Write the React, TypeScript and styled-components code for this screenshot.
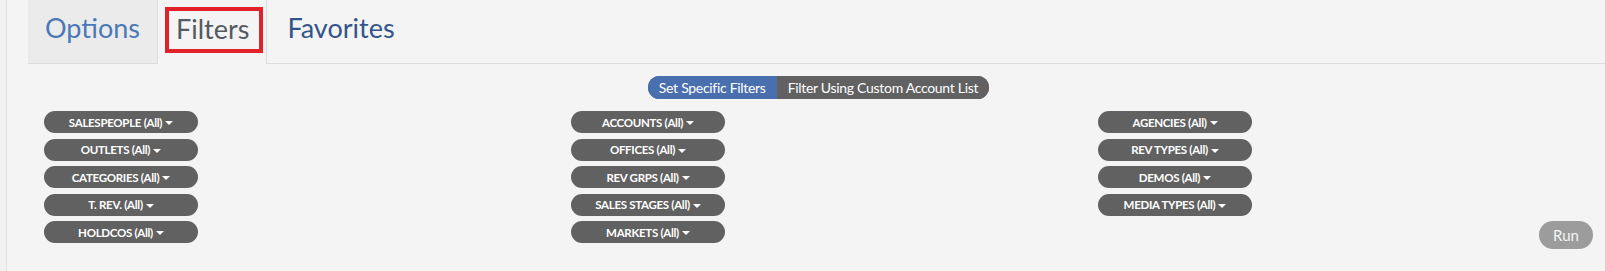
import React from "react";
import styled, { createGlobalStyle } from "styled-components";

const colors = {
    page: "#f4f4f4",
    line: "#dddddd",
    tabIdle: "#ebebeb",
    pill: "#616161",
    blue: "#4a6fae",
    run: "#9c9c9c",
};

const GlobalStyle = createGlobalStyle`
    body {
        margin: 0;
        background: #f2f2f2;
        overflow: hidden;
        font-family: Lato, "Liberation Sans", sans-serif;
    }
`;

const Page = styled.div`
    margin-left: 6px;
    border-left: 1px solid #e3e3e3;
    background: ${colors.page};
    min-height: 271px;
    padding-left: 21px;
`;

const TabBar = styled.nav`
    display: flex;
    height: 63px;
    border-bottom: 1px solid ${colors.line};
`;

type Tone = "options" | "filters" | "favorites";

const tabColor: Record<Tone, string> = {
    options: "#4b79b7",
    filters: "#555a61",
    favorites: "#34558a",
};

const tabPadding: Record<Tone, string> = {
    options: "0 17px",
    filters: "0 17px 0 18px",
    favorites: "0 18px 0 20px",
};

const Tab = styled.div<{ $tone: Tone; $active?: boolean }>`
    position: relative;
    display: flex;
    align-items: center;
    height: ${(p) => (p.$active ? "64px" : "63px")};
    box-sizing: border-box;
    font-size: 27px;
    color: ${(p) => tabColor[p.$tone]};
    background: ${(p) =>
        p.$tone === "options" ? colors.tabIdle : p.$active ? colors.page : "transparent"};
    border-left: ${(p) => (p.$active ? `1px solid ${colors.line}` : "none")};
    border-right: ${(p) => (p.$active ? `1px solid ${colors.line}` : "none")};
    padding: ${(p) => tabPadding[p.$tone]};
    padding-bottom: 8px;
`;

const Highlight = styled.span`
    position: absolute;
    left: 7px;
    top: 7px;
    width: 98px;
    height: 46px;
    box-sizing: border-box;
    border: 4px solid #e3212b;
`;

const Content = styled.section`
    width: 1581px;
`;

const ToggleRow = styled.div`
    display: flex;
    justify-content: center;
    margin-top: 12px;
`;

const Toggle = styled.div`
    display: flex;
    height: 23px;
    border-radius: 12px;
    overflow: hidden;
    background: ${colors.pill};
`;

const Segment = styled.span<{ $on?: boolean }>`
    padding: 0 11px;
    line-height: 23px;
    font-size: 14px;
    letter-spacing: -0.3px;
    color: #fff;
    background: ${(p) => (p.$on ? colors.blue : colors.pill)};
`;

const FilterGrid = styled.div`
    display: grid;
    grid-template-columns: repeat(3, 527px);
    margin-top: 12px;
`;

const Column = styled.div`
    display: flex;
    flex-direction: column;
    align-items: flex-start;
    gap: 5.5px;
    padding: 0 16px;
`;

const Pill = styled.button`
    display: flex;
    align-items: center;
    justify-content: center;
    width: 154px;
    height: 22px;
    padding: 0;
    border: none;
    border-radius: 11px;
    background: ${colors.pill};
    color: #fff;
    font-family: Lato, "Liberation Sans", sans-serif;
    font-weight: 700;
    font-size: 11.5px;
    letter-spacing: -0.3px;
`;

const Caret = styled.span`
    width: 0;
    height: 0;
    margin-left: 3px;
    margin-top: 2px;
    border-left: 4px solid transparent;
    border-right: 4px solid transparent;
    border-top: 4px solid #fff;
`;

const RunButton = styled.button`
    align-self: flex-end;
    width: 54px;
    height: 28px;
    padding: 0;
    border: none;
    border-radius: 14px;
    background: ${colors.run};
    color: #f4f4f4;
    font-family: Lato, "Liberation Sans", sans-serif;
    font-size: 15px;
`;

const columns = [
    ["SALESPEOPLE", "OUTLETS", "CATEGORIES", "T. REV.", "HOLDCOS"],
    ["ACCOUNTS", "OFFICES", "REV GRPS", "SALES STAGES", "MARKETS"],
    ["AGENCIES", "REV TYPES", "DEMOS", "MEDIA TYPES"],
];

const App = () => {
    return (
        <>
            <GlobalStyle />
            <Page>
                <TabBar>
                    <Tab $tone="options">Options</Tab>
                    <Tab $tone="filters" $active>
                        Filters
                        <Highlight />
                    </Tab>
                    <Tab $tone="favorites">Favorites</Tab>
                </TabBar>
                <Content>
                    <ToggleRow>
                        <Toggle>
                            <Segment $on>Set Specific Filters</Segment>
                            <Segment>Filter Using Custom Account List</Segment>
                        </Toggle>
                    </ToggleRow>
                    <FilterGrid>
                        {columns.map((col, i) => (
                            <Column key={i}>
                                {col.map((name) => (
                                    <Pill key={name}>
                                        {name} (All)
                                        <Caret />
                                    </Pill>
                                ))}
                                {i === 2 && <RunButton>Run</RunButton>}
                            </Column>
                        ))}
                    </FilterGrid>
                </Content>
            </Page>
        </>
    );
};

export default App;
